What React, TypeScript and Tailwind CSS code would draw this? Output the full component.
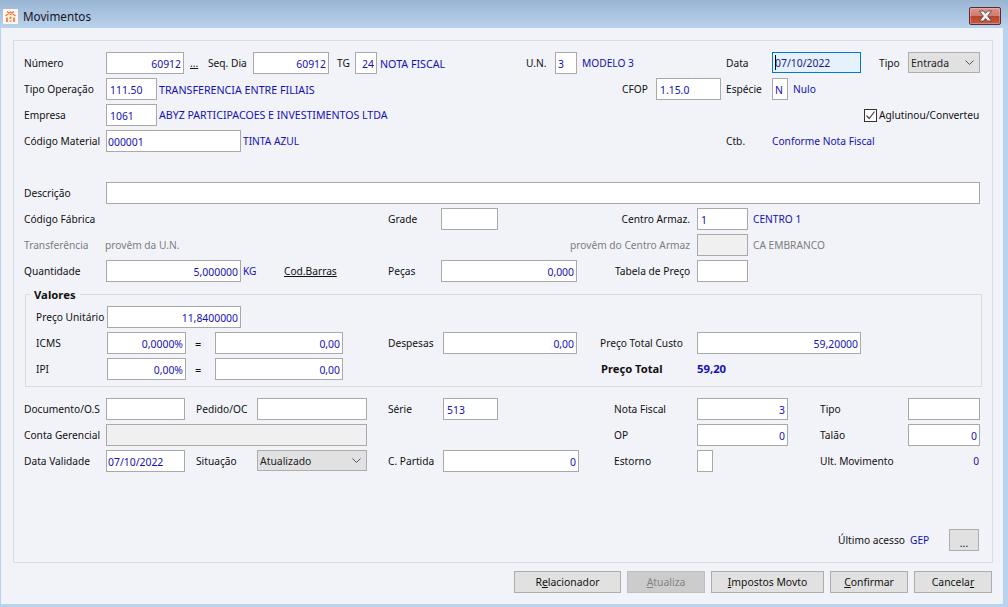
import type { ReactNode } from "react";

const cn = (...parts: (string | undefined)[]) => parts.filter(Boolean).join(" ");

function Lbl({ className, children }: { className?: string; children?: ReactNode }) {
  return <span className={cn("shrink-0 whitespace-nowrap pt-[2px] text-[#111]", className)}>{children}</span>;
}

function Txt({ className, children }: { className?: string; children?: ReactNode }) {
  return <span className={cn("shrink-0 whitespace-nowrap pt-[2px] text-[#1410b4]", className)}>{children}</span>;
}

function Muted({ className, children }: { className?: string; children?: ReactNode }) {
  return <span className={cn("shrink-0 whitespace-nowrap pt-[2px] text-[#7d7d7d]", className)}>{children}</span>;
}

function Inp({ className, value = "", right }: { className?: string; value?: string; right?: boolean }) {
  return (
    <input
      readOnly
      value={value}
      className={cn(
        "h-[22px] shrink-0 border border-[#a9a9a9] bg-white pt-[2px] text-[#1410b4] outline-none",
        right ? "pr-[2px] text-right" : "pl-[1px]",
        className,
      )}
    />
  );
}

function Sel({ className, value }: { className?: string; value: string }) {
  return (
    <div className={cn("relative h-[21px] shrink-0 self-start", className)}>
      <select
        defaultValue={value}
        className="h-full w-full appearance-none border border-[#adadad] bg-[#e1e1e1] pl-[2px] pt-[3px] text-[#222] outline-none"
      >
        <option>{value}</option>
      </select>
      <svg className="absolute right-[6px] top-[8px] h-[6px] w-[9px]" viewBox="0 0 9 6" fill="none">
        <path d="M0.5 0.5 L4.5 4.5 L8.5 0.5" stroke="#555" strokeWidth="1" />
      </svg>
    </div>
  );
}

function Row({ className, children }: { className?: string; children: ReactNode }) {
  return <div className={cn("flex h-[22px] items-center", className)}>{children}</div>;
}

function Btn({ className, disabled, children }: { className?: string; disabled?: boolean; children: ReactNode }) {
  return (
    <button
      type="button"
      disabled={disabled}
      className={cn(
        "h-[22px] border pt-[1px]",
        disabled ? "border-[#bfbfbf] bg-[#cccccc] text-[#838383]" : "border-[#adadad] bg-[#e1e1e1] text-[#111]",
        className,
      )}
    >
      {children}
    </button>
  );
}

function AppIcon() {
  return (
    <div className="flex h-[15px] w-[15px] items-center justify-center bg-[#fdf6f0]">
      <svg className="h-[13px] w-[13px]" viewBox="0 0 13 13" fill="none">
        <path d="M3 1.5 L6.5 4.5 L10 1.5 M1.5 6 L6.5 2 L11.5 6" stroke="#f0782c" strokeWidth="1.3" />
        <path d="M2 7.5 H4 V12 H2 Z M5.5 6.5 H7.5 V9 H5.5 Z M9 7.5 H11 V12 H9 Z" fill="#f58a46" />
        <path d="M5.5 10 H7.5 V12 H5.5 Z" fill="#f9b083" />
      </svg>
    </div>
  );
}

function CloseButton() {
  return (
    <div className="relative h-[18px] w-[32px] overflow-hidden rounded-[2px] border border-[#5b2a3a] bg-[linear-gradient(#d9948a_0%,#cf7c6e_48%,#b9432c_52%,#c75a42_100%)] shadow-[inset_0_0_0_1px_rgba(255,220,210,0.35)]">
      <svg className="absolute left-[8px] top-[2px] h-[12px] w-[15px]" viewBox="0 0 15 12">
        <path
          d="M1.5 1 H5.5 L7.5 3.5 L9.5 1 H13.5 L9.7 6 L13.5 11 H9.5 L7.5 8.5 L5.5 11 H1.5 L5.3 6 Z"
          fill="#f0f0f2"
          stroke="#5e4a4a"
          strokeWidth="0.9"
        />
      </svg>
    </div>
  );
}

export default function App() {
  return (
    <div className="flex h-[607px] w-[1008px] flex-col overflow-hidden bg-[#b9d3ee] font-['Noto_Sans',sans-serif] text-[10.2px] [&_input]:text-[10.4px] [&_select]:text-[10.4px] [&_button]:text-[10.4px]">
      {/* title bar */}
      <div className="flex h-[28px] shrink-0 items-start bg-[linear-gradient(#9ab5d2,#b9d3ee)] pl-[3px]">
        <div className="mt-[9px]">
          <AppIcon />
        </div>
        <span className="ml-[5px] mt-[9px] text-[11.7px] leading-[15px] text-[#14141e]">Movimentos</span>
        <div className="ml-auto mr-[7px] mt-[7px]">
          <CloseButton />
        </div>
      </div>

      {/* client area */}
      <div className="ml-[1px] mr-[5px] mb-[3px] flex min-h-0 flex-1 flex-col bg-[#f1f3f9] pl-[12px] pr-[10px] pt-[12px]">
        <div className="h-[523px] border border-[#dcdcdc] pl-[10px] pt-[11px]">
          <div className="flex flex-col gap-[4px]">
            <Row>
              <Lbl className="w-[82px]">Número</Lbl>
              <Inp className="w-[78px]" value="60912" right />
              <Lbl className="w-[24px] pl-[6px] underline">...</Lbl>
              <Lbl className="w-[45px]">Seq. Dia</Lbl>
              <Inp className="w-[76px]" value="60912" right />
              <Lbl className="w-[26px] pl-[8px]">TG</Lbl>
              <Inp className="w-[22px]" value="24" right />
              <Txt className="w-[149px] pl-[3px] text-[10.7px]">NOTA FISCAL</Txt>
              <Lbl className="w-[29px]">U.N.</Lbl>
              <Inp className="w-[22px] pl-[2px]" value="3" />
              <Txt className="w-[149px] pl-[5px]">MODELO 3</Txt>
              <Lbl className="w-[46px]">Data</Lbl>
              <div className="relative shrink-0 self-start">
                <input
                  readOnly
                  value="07/10/2022"
                  className="h-[21px] w-[89px] border border-[#0078d7] bg-[#e5f1fb] pl-[2px] text-[#1a1a8c] outline-none"
                />
                <div className="absolute left-[3px] top-[3px] h-[15px] w-[1px] bg-black" />
              </div>
              <Lbl className="w-[47px] pl-[18px]">Tipo</Lbl>
              <Sel className="w-[72px]" value="Entrada" />
            </Row>
            <Row>
              <Lbl className="w-[82px]">Tipo Operação</Lbl>
              <Inp className="w-[51px] pl-[3px]" value="111.50" />
              <Txt className="w-[465px] pl-[2px] text-[10.7px]">TRANSFERENCIA ENTRE FILIAIS</Txt>
              <Lbl className="w-[34px]">CFOP</Lbl>
              <Inp className="w-[65px] pl-[3px]" value="1.15.0" />
              <Lbl className="w-[51px] pl-[5px]">Espécie</Lbl>
              <Inp className="w-[16px] pl-[2px]" value="N" />
              <Txt className="pl-[5px]">Nulo</Txt>
            </Row>
            <Row>
              <Lbl className="w-[82px]">Empresa</Lbl>
              <Inp className="w-[51px] pl-[3px]" value="1061" />
              <Txt className="w-[707px] pl-[2px] text-[10.6px]">ABYZ PARTICIPACOES E INVESTIMENTOS LTDA</Txt>
              <div className="flex h-[13px] w-[13px] shrink-0 items-center justify-center border border-[#333] bg-white">
                <svg className="h-[11px] w-[11px]" viewBox="0 0 11 11" fill="none">
                  <path d="M1.5 5.5 L4.2 8.5 L9.5 1.5" stroke="#444" strokeWidth="1.2" />
                </svg>
              </div>
              <Lbl className="pl-[2px]">Aglutinou/Converteu</Lbl>
            </Row>
            <Row>
              <Lbl className="w-[82px]">Código Material</Lbl>
              <Inp className="w-[135px]" value="000001" />
              <Txt className="w-[485px] pl-[2px]">TINTA AZUL</Txt>
              <Lbl className="w-[46px]">Ctb.</Lbl>
              <Txt>Conforme Nota Fiscal</Txt>
            </Row>

            <Row className="mt-[26px]">
              <Lbl className="w-[82px]">Descrição</Lbl>
              <Inp className="w-[874px]" />
            </Row>
            <Row>
              <Lbl className="w-[364px]">Código Fábrica</Lbl>
              <Lbl className="w-[53px]">Grade</Lbl>
              <Inp className="w-[57px]" />
              <Lbl className="w-[199px] pr-[7px] text-right">Centro Armaz.</Lbl>
              <Inp className="w-[51px] pl-[3px]" value="1" />
              <Txt className="pl-[5px]">CENTRO 1</Txt>
            </Row>
            <Row>
              <Muted className="w-[81px]">Transferência</Muted>
              <Muted className="w-[465px]">provêm da U.N.</Muted>
              <Muted className="w-[127px]">provêm do Centro Armaz</Muted>
              <div className="h-[22px] w-[51px] shrink-0 border border-[#a9a9a9] bg-[#f0f0f0]" />
              <Muted className="pl-[5px]">CA EMBRANCO</Muted>
            </Row>
            <Row>
              <Lbl className="w-[82px]">Quantidade</Lbl>
              <Inp className="w-[135px]" value="5,000000" right />
              <Txt className="w-[43px] pl-[2px]">KG</Txt>
              <Lbl className="w-[104px] underline">Cod.Barras</Lbl>
              <Lbl className="w-[53px]">Peças</Lbl>
              <Inp className="w-[136px]" value="0,000" right />
              <Lbl className="w-[120px] pl-[38px]">Tabela de Preço</Lbl>
              <Inp className="w-[51px]" />
            </Row>
          </div>

          {/* Valores */}
          <div className="relative ml-[1px] mt-[12px] h-[93px] w-[957px] border border-[#dcdcdc] pl-[10px] pt-[11px]">
            <span className="absolute left-[4px] top-[-7px] bg-[#f1f3f9] px-[4px] text-[11.3px] font-bold leading-[14px] text-[#111]">
              Valores
            </span>
            <div className="flex flex-col gap-[4px]">
              <Row>
                <Lbl className="w-[71px]">Preço Unitário</Lbl>
                <Inp className="w-[134px]" value="11,8400000" right />
              </Row>
              <Row>
                <Lbl className="w-[71px]">ICMS</Lbl>
                <Inp className="w-[79px]" value="0,0000%" right />
                <Lbl className="w-[29px] pl-[9px] text-[11px]">=</Lbl>
                <Inp className="w-[128px]" value="0,00" right />
                <Lbl className="w-[100px] pl-[45px]">Despesas</Lbl>
                <Inp className="w-[134px]" value="0,00" right />
                <Lbl className="w-[120px] pl-[23px]">Preço Total Custo</Lbl>
                <Inp className="w-[164px]" value="59,20000" right />
              </Row>
              <Row>
                <Lbl className="w-[71px]">IPI</Lbl>
                <Inp className="w-[79px]" value="0,00%" right />
                <Lbl className="w-[29px] pl-[9px] text-[11px]">=</Lbl>
                <Inp className="w-[128px]" value="0,00" right />
                <Lbl className="w-[258px]" />
                <Lbl className="w-[96px] pb-[2px] text-[11.2px] font-bold">Preço Total</Lbl>
                <Txt className="pb-[2px] text-[11.3px] font-bold">59,20</Txt>
              </Row>
            </div>
          </div>

          <div className="mt-[11px] flex flex-col gap-[4px]">
            <Row>
              <Lbl className="w-[82px]">Documento/O.S</Lbl>
              <Inp className="w-[79px]" />
              <Lbl className="w-[72px] pl-[11px]">Pedido/OC</Lbl>
              <Inp className="w-[110px]" />
              <Lbl className="w-[76px] pl-[21px]">Série</Lbl>
              <Inp className="w-[55px] pl-[3px]" value="513" />
              <Lbl className="w-[199px] pl-[116px]">Nota Fiscal</Lbl>
              <Inp className="w-[91px]" value="3" right />
              <Lbl className="w-[120px] pl-[32px]">Tipo</Lbl>
              <Inp className="w-[72px]" />
            </Row>
            <Row>
              <Lbl className="w-[82px]">Conta Gerencial</Lbl>
              <div className="h-[22px] w-[261px] shrink-0 border border-[#a9a9a9] bg-[#f0f0f0]" />
              <Lbl className="w-[330px] pl-[247px]">OP</Lbl>
              <Inp className="w-[91px]" value="0" right />
              <Lbl className="w-[120px] pl-[32px]">Talão</Lbl>
              <Inp className="w-[72px]" value="0" right />
            </Row>
            <Row>
              <Lbl className="w-[82px]">Data Validade</Lbl>
              <Inp className="w-[79px]" value="07/10/2022" />
              <Lbl className="w-[72px] pl-[11px]">Situação</Lbl>
              <Sel className="w-[110px]" value="Atualizado" />
              <Lbl className="w-[76px] pl-[21px]">C. Partida</Lbl>
              <Inp className="w-[136px]" value="0" right />
              <Lbl className="w-[118px] pl-[35px]">Estorno</Lbl>
              <Inp className="w-[16px]" />
              <Lbl className="w-[187px] pl-[107px]">Ult. Movimento</Lbl>
              <Txt className="w-[80px] pr-[1px] text-right">0</Txt>
            </Row>
            <Row className="mt-[53px]">
              <Lbl className="ml-[814px] w-[72px]">Último acesso</Lbl>
              <Txt className="w-[39px]">GEP</Txt>
              <Btn className="w-[30px] pt-[6px]">...</Btn>
            </Row>
          </div>
        </div>

        {/* footer buttons */}
        <div className="mr-[1px] mt-[8px] flex justify-end gap-[6px]">
          <Btn className="w-[107px]">
            R<u>e</u>lacionador
          </Btn>
          <Btn className="w-[78px]" disabled>
            <u>A</u>tualiza
          </Btn>
          <Btn className="w-[113px]">
            <u>I</u>mpostos Movto
          </Btn>
          <Btn className="w-[78px]">
            <u>C</u>onfirmar
          </Btn>
          <Btn className="w-[78px]">
            Cancela<u>r</u>
          </Btn>
        </div>
      </div>
    </div>
  );
}
